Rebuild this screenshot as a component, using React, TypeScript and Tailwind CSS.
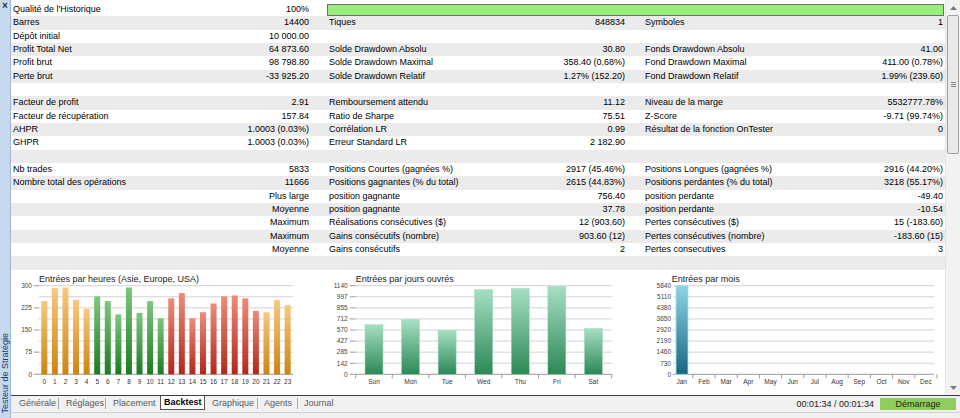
import React from "react";

type Cell = [string, string] | null;

const rows: Cell[][] = [
  [["Qualité de l'Historique", "100%"], null, null],
  [["Barres", "14400"], ["Tiques", "848834"], ["Symboles", "1"]],
  [["Dépôt initial", "10 000.00"], null, null],
  [["Profit Total Net", "64 873.60"], ["Solde Drawdown Absolu", "30.80"], ["Fonds Drawdown Absolu", "41.00"]],
  [["Profit brut", "98 798.80"], ["Solde Drawdown Maximal", "358.40 (0.68%)"], ["Fond Drawdown Maximal", "411.00 (0.78%)"]],
  [["Perte brut", "-33 925.20"], ["Solde Drawdown Relatif", "1.27% (152.20)"], ["Fond Drawdown Relatif", "1.99% (239.60)"]],
  [null, null, null],
  [["Facteur de profit", "2.91"], ["Remboursement attendu", "11.12"], ["Niveau de la marge", "5532777.78%"]],
  [["Facteur de récupération", "157.84"], ["Ratio de Sharpe", "75.51"], ["Z-Score", "-9.71 (99.74%)"]],
  [["AHPR", "1.0003 (0.03%)"], ["Corrélation LR", "0.99"], ["Résultat de la fonction OnTester", "0"]],
  [["GHPR", "1.0003 (0.03%)"], ["Erreur Standard LR", "2 182.90"], null],
  [null, null, null],
  [["Nb trades", "5833"], ["Positions Courtes (gagnées %)", "2917 (45.46%)"], ["Positions Longues (gagnées %)", "2916 (44.20%)"]],
  [["Nombre total des opérations", "11666"], ["Positions gagnantes (% du total)", "2615 (44.83%)"], ["Positions perdantes (% du total)", "3218 (55.17%)"]],
  [["", "Plus large"], ["position gagnante", "756.40"], ["position perdante", "-49.40"]],
  [["", "Moyenne"], ["position gagnante", "37.78"], ["position perdante", "-10.54"]],
  [["", "Maximum"], ["Réalisations consécutives ($)", "12 (903.60)"], ["Pertes consécutives ($)", "15 (-183.60)"]],
  [["", "Maximum"], ["Gains consécutifs (nombre)", "903.60 (12)"], ["Pertes consécutives (nombre)", "-183.60 (15)"]],
  [["", "Moyenne"], ["Gains consécutifs", "2"], ["Pertes consecutives", "3"]],
  [null, null, null],
];

const FONT = "Liberation Sans, Arial, sans-serif";
const TOP = 15.7;
const BOT = 104.3;
const lineY = (k: number, n: number) => TOP + (k * (BOT - TOP)) / n;

const Grid = ({ x0, x1, n }: { x0: number; x1: number; n: number }) => (
  <>
    {Array.from({ length: n + 1 }).map((_, k) => (
      <line
        key={k}
        x1={x0}
        x2={x1}
        y1={lineY(k, n)}
        y2={lineY(k, n)}
        stroke={k === n ? "#9a9a9a" : "#d2d2d2"}
        strokeWidth={1}
      />
    ))}
  </>
);

const hours = [248, 292, 294, 252, 222, 264, 248, 203, 294, 208, 248, 190, 257, 275, 190, 210, 240, 264, 267, 257, 215, 210, 251, 234];

function HoursChart() {
  const x0 = 28;
  const cw = 10.58;
  const labels = ["300", "225", "150", "75", "0"];
  return (
    <svg width={309} height={126} className="block shrink-0" fontFamily={FONT}>
      <defs>
        <linearGradient id="gO" x1="0" y1="0" x2="0" y2="1">
          <stop offset="0" stopColor="#f7c97f" />
          <stop offset="1" stopColor="#cd8412" />
        </linearGradient>
        <linearGradient id="gG" x1="0" y1="0" x2="0" y2="1">
          <stop offset="0" stopColor="#7fc77f" />
          <stop offset="1" stopColor="#1d7a22" />
        </linearGradient>
        <linearGradient id="gR" x1="0" y1="0" x2="0" y2="1">
          <stop offset="0" stopColor="#ec8c7c" />
          <stop offset="1" stopColor="#b1281a" />
        </linearGradient>
      </defs>
      <text x={x0} y={12} fontSize={9} fill="#222">Entrées par heures (Asie, Europe, USA)</text>
      <Grid x0={x0} x1={282} n={8} />
      {labels.map((l, k) => (
        <g key={l}>
          <text x={21} y={lineY(k * 2, 8) + 2.3} fontSize={6.5} fill="#444" textAnchor="end">{l}</text>
          <line x1={23} x2={x0} y1={lineY(k * 2, 8)} y2={lineY(k * 2, 8)} stroke="#9a9a9a" />
        </g>
      ))}
      {hours.map((v, i) => {
        const h = (v / 300) * (BOT - TOP);
        const fill = i >= 5 && i <= 11 ? "url(#gG)" : i >= 12 && i <= 20 ? "url(#gR)" : "url(#gO)";
        return <rect key={i} x={x0 + i * cw + 2.3} y={BOT - h} width={6} height={h} fill={fill} />;
      })}
      {hours.map((_, i) => (
        <text key={i} x={x0 + i * cw + 5.3} y={114} fontSize={6.5} fill="#333" textAnchor="middle">{i}</text>
      ))}
    </svg>
  );
}

const days = [["Sun", 638], ["Mon", 704], ["Tue", 567], ["Wed", 1090], ["Thu", 1105], ["Fri", 1130], ["Sat", 590]] as const;

function DaysChart() {
  const x0 = 35.7;
  const cw = 36.57;
  const labels = ["1140", "997", "855", "712", "570", "427", "285", "142", "0"];
  return (
    <svg width={316} height={126} className="block shrink-0" fontFamily={FONT}>
      <defs>
        <linearGradient id="gD" x1="0" y1="0" x2="0" y2="1">
          <stop offset="0" stopColor="#a6dfc2" />
          <stop offset="1" stopColor="#2c8856" />
        </linearGradient>
      </defs>
      <text x={x0} y={12} fontSize={9} fill="#222">Entrées par jours ouvrés</text>
      <Grid x0={x0} x1={291.7} n={8} />
      {labels.map((l, k) => (
        <g key={l}>
          <text x={27.7} y={lineY(k, 8) + 2.3} fontSize={6.5} fill="#444" textAnchor="end">{l}</text>
          <line x1={30} x2={x0} y1={lineY(k, 8)} y2={lineY(k, 8)} stroke="#9a9a9a" />
        </g>
      ))}
      {days.map(([d, v], i) => {
        const h = (v / 1140) * (BOT - TOP);
        const cx = x0 + i * cw + cw / 2;
        return (
          <g key={d}>
            <rect x={cx - 9} y={BOT - h} width={18} height={h} fill="url(#gD)" stroke="#9fd8bb" strokeWidth={0.5} />
            <text x={cx} y={114} fontSize={6.5} fill="#333" textAnchor="middle">{d}</text>
            <line x1={x0 + (i + 1) * cw} x2={x0 + (i + 1) * cw} y1={BOT} y2={BOT + 4} stroke="#9a9a9a" />
          </g>
        );
      })}
      <line x1={x0} x2={x0} y1={BOT} y2={BOT + 4} stroke="#9a9a9a" />
    </svg>
  );
}

const months = ["Jan", "Feb", "Mar", "Apr", "May", "Jun", "Jul", "Aug", "Sep", "Oct", "Nov", "Dec"];

function MonthsChart() {
  const x0 = 37;
  const labels = ["5840", "5110", "4380", "3650", "2920", "2190", "1460", "730", "0"];
  return (
    <svg width={309} height={126} className="block shrink-0" fontFamily={FONT}>
      <defs>
        <linearGradient id="gM" x1="0" y1="0" x2="0" y2="1">
          <stop offset="0" stopColor="#8fd3e4" />
          <stop offset="1" stopColor="#176783" />
        </linearGradient>
      </defs>
      <text x={35.7} y={12} fontSize={9} fill="#222">Entrées par mois</text>
      <Grid x0={x0} x1={298} n={8} />
      {labels.map((l, k) => (
        <g key={l}>
          <text x={35} y={lineY(k, 8) + 2.3} fontSize={6.5} fill="#444" textAnchor="end">{l}</text>
        </g>
      ))}
      <rect x={40} y={TOP} width={12} height={BOT - TOP} fill="url(#gM)" stroke="#a9e0ee" strokeWidth={0.8} />
      {months.map((m, i) => (
        <g key={m}>
          <text x={45.7 + i * 22.2} y={114} fontSize={6.5} fill="#333" textAnchor="middle">{m}</text>
          <line x1={56.8 + i * 22.2} x2={56.8 + i * 22.2} y1={BOT} y2={BOT + 4} stroke="#9a9a9a" />
        </g>
      ))}
    </svg>
  );
}

const Tab = ({ label, w, pl }: { label: string; w: string; pl: string }) => (
  <div className={`${w} ${pl} text-[#5a5a5a]`}>{label}</div>
);

const Sep = () => <div className="h-[11px] w-px bg-[#a8a8a8]" />;

export default function App() {
  return (
    <div className="flex h-[418px] w-[960px] overflow-hidden bg-[#f0f0f0] font-['Liberation_Sans',Arial,sans-serif] text-[9px] leading-none text-black">
      {/* side caption */}
      <div className="flex w-[11px] shrink-0 flex-col items-center justify-between border-r border-[#9fb5d3] bg-[#c7d9ef]">
        <span className="mt-[1px] text-[10px] font-bold text-[#333]">×</span>
        <span className="mb-[4px] rotate-180 text-[9px] text-[#1f3a66] [writing-mode:vertical-rl]">Testeur de Stratégie</span>
      </div>

      <div className="flex flex-1 flex-col">
        <div className="flex h-[396px] border-b border-[#3c3c3c]">
          <div className="flex flex-1 flex-col bg-white pt-[3px]">
            {rows.map((cells, i) => (
              <div
                key={i}
                className={`flex h-[13.33px] shrink-0 items-center gap-[20px] pl-[2px] ${i % 2 ? "bg-[#ebebeb]" : "bg-white"}`}
              >
                <div className="flex w-[296px] justify-between">
                  <span>{cells[0]?.[0]}</span>
                  <span>{cells[0]?.[1]}</span>
                </div>
                {i === 0 ? (
                  <div className="ml-[-2px] h-[12px] w-[617px] border border-[#6e6e6e] bg-[#98ef7c]" />
                ) : (
                  <>
                    <div className="flex w-[296px] justify-between">
                      <span>{cells[1]?.[0]}</span>
                      <span>{cells[1]?.[1]}</span>
                    </div>
                    <div className="flex w-[298px] justify-between">
                      <span>{cells[2]?.[0]}</span>
                      <span>{cells[2]?.[1]}</span>
                    </div>
                  </>
                )}
              </div>
            ))}
            <div className="flex flex-1">
              <HoursChart />
              <DaysChart />
              <MonthsChart />
            </div>
          </div>

          {/* scrollbar */}
          <div className="flex w-[15px] shrink-0 flex-col border-l border-[#e3e3e3] bg-[#f2f2f2]">
            <div className="flex h-[15px] items-center justify-center">
              <svg width="7" height="4" viewBox="0 0 7 4"><path d="M0 4 L3.5 0 L7 4 Z" fill="#7a7a7a" /></svg>
            </div>
            <div className="mx-[1px] flex h-[139px] items-center justify-center rounded-[2px] border border-[#a0a0a0] bg-[#e9e9e9]">
              <div className="flex flex-col gap-[1px]">
                <div className="h-px w-[5px] bg-[#8a8a8a]" />
                <div className="h-px w-[5px] bg-[#8a8a8a]" />
                <div className="h-px w-[5px] bg-[#8a8a8a]" />
              </div>
            </div>
            <div className="flex-1" />
            <div className="flex h-[15px] items-center justify-center">
              <svg width="7" height="4" viewBox="0 0 7 4"><path d="M0 0 L3.5 4 L7 0 Z" fill="#7a7a7a" /></svg>
            </div>
          </div>
        </div>

        {/* tabs */}
        <div className="flex h-[17px] items-start border-b border-[#d2d2d2]">
          <div className="flex h-[14px] items-center">
            <Tab label="Générale" w="w-[47px]" pl="pl-[8px]" />
            <Sep />
            <Tab label="Réglages" w="w-[46px]" pl="pl-[7px]" />
            <Sep />
            <Tab label="Placement" w="w-[54px]" pl="pl-[7px]" />
            <div className="mt-[-1px] flex h-[14px] w-[45px] items-center border-x border-b border-[#555] bg-white pl-[3px] font-bold">
              Backtest
            </div>
            <Tab label="Graphique" w="w-[52px]" pl="pl-[7px]" />
            <Sep />
            <Tab label="Agents" w="w-[39px]" pl="pl-[6px]" />
            <Sep />
            <Tab label="Journal" w="w-[50px]" pl="pl-[6px]" />
          </div>
          <div className="flex-1" />
          <div className="flex h-[15px] items-center gap-[6px] pr-[4px] pt-[1px]">
            <span className="text-[#222]">00:01:34 / 00:01:34</span>
            <div className="flex h-[12px] w-[76px] items-center justify-center bg-[#8fcd5e] text-[#1c2a10]">Démarrage</div>
          </div>
        </div>
      </div>
    </div>
  );
}
